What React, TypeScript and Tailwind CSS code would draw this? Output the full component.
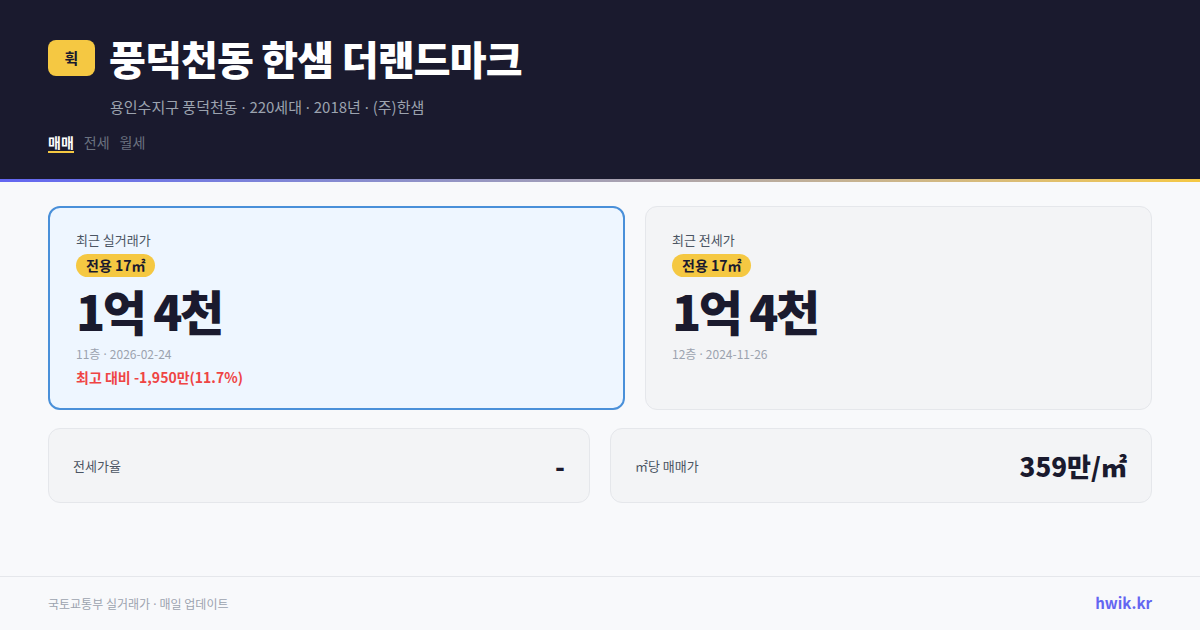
const font = { fontFamily: '"Noto Sans CJK KR", "Noto Sans", sans-serif' };

function Dot() {
  return <span style={{ fontFamily: '"Noto Sans", sans-serif' }}> · </span>;
}

function Badge() {
  return (
    <span className="inline-flex items-center rounded-full bg-[#f5c842] px-[10px] py-[2px] text-[14px] font-bold leading-[19px] text-[#1a1a2e]">
      전용 17㎡
    </span>
  );
}

export default function App() {
  return (
    <div
      style={font}
      className="flex h-[630px] w-[1200px] flex-col overflow-hidden bg-[#f8f9fb]"
    >
      <header className="h-[179px] bg-[#1a1a2e] px-12 pt-[36px]">
        <div className="flex items-center gap-[14px]">
          <div className="flex h-[36px] w-[47px] items-center justify-center rounded-lg bg-[#f5c842] text-[15px] font-bold text-[#1a1a2e]">
            휙
          </div>
          <h1 className="text-[40px] font-black leading-[44px] tracking-[-0.02em] text-white">
            풍덕천동 한샘 더랜드마크
          </h1>
        </div>
        <p className="mt-[17px] pl-[62px] text-[15px] leading-5 text-[#9ca3af]">
          용인수지구 풍덕천동<Dot />220세대<Dot />2018년<Dot />(주)한샘
        </p>
        <nav className="mt-[16px] flex gap-[10px] text-[14px] leading-[18px]">
          <span className="border-b-2 border-[#f5c842] font-bold text-white">매매</span>
          <span className="text-[#6b7280]">전세</span>
          <span className="text-[#6b7280]">월세</span>
        </nav>
      </header>
      <div className="h-[3px] bg-gradient-to-r from-[#6366f1] to-[#f5c842]" />

      <main className="flex-1 px-12 pt-[24px]">
        <div className="grid grid-cols-[577px_1fr] gap-5">
          <section className="h-[204px] rounded-xl border-2 border-[#4a90d9] bg-[#eef6ff] px-[26px] pt-[22px]">
            <div className="text-[13px] leading-5 text-[#4b5563]">최근 실거래가</div>
            <div className="mt-[2px]">
              <Badge />
            </div>
            <div className="mt-[1px] text-[48px] font-black leading-[64px] tracking-[-0.05em] text-[#1a1a2e]">
              1억 4천
            </div>
            <div className="mt-[2px] text-[12px] leading-5 text-[#9ca3af]">
              11층<Dot />2026-02-24
            </div>
            <div className="mt-[2px] text-[14px] font-bold leading-5 text-[#ef4444]">
              최고 대비 -1,950만(11.7%)
            </div>
          </section>
          <section className="h-[204px] rounded-xl border border-[#e5e7eb] bg-[#f3f4f6] px-[26px] pt-[23px]">
            <div className="text-[13px] leading-5 text-[#4b5563]">최근 전세가</div>
            <div className="mt-[2px]">
              <Badge />
            </div>
            <div className="mt-[1px] text-[48px] font-black leading-[64px] tracking-[-0.05em] text-[#1a1a2e]">
              1억 4천
            </div>
            <div className="mt-[2px] text-[12px] leading-5 text-[#9ca3af]">
              12층<Dot />2024-11-26
            </div>
          </section>
        </div>

        <div className="mt-[18px] grid grid-cols-2 gap-5">
          <section className="flex h-[75px] items-center justify-between rounded-xl border border-[#e5e7eb] bg-[#f3f4f6] px-6">
            <span className="text-[13px] text-[#4b5563]">전세가율</span>
            <span className="text-[26px] font-black text-[#1a1a2e]">-</span>
          </section>
          <section className="flex h-[75px] items-center justify-between rounded-xl border border-[#e5e7eb] bg-[#f3f4f6] px-6">
            <span className="text-[13px] text-[#4b5563]">㎡당 매매가</span>
            <span className="text-[26px] font-black text-[#1a1a2e]">359만/㎡</span>
          </section>
        </div>
      </main>

      <footer className="flex h-[54px] items-center justify-between border-t border-[#e5e7eb] px-12">
        <span className="pt-[2px] text-[12px] text-[#9ca3af]">
          국토교통부 실거래가<Dot />매일 업데이트
        </span>
        <span className="text-[15px] font-bold text-[#6366f1]">hwik.kr</span>
      </footer>
    </div>
  );
}
